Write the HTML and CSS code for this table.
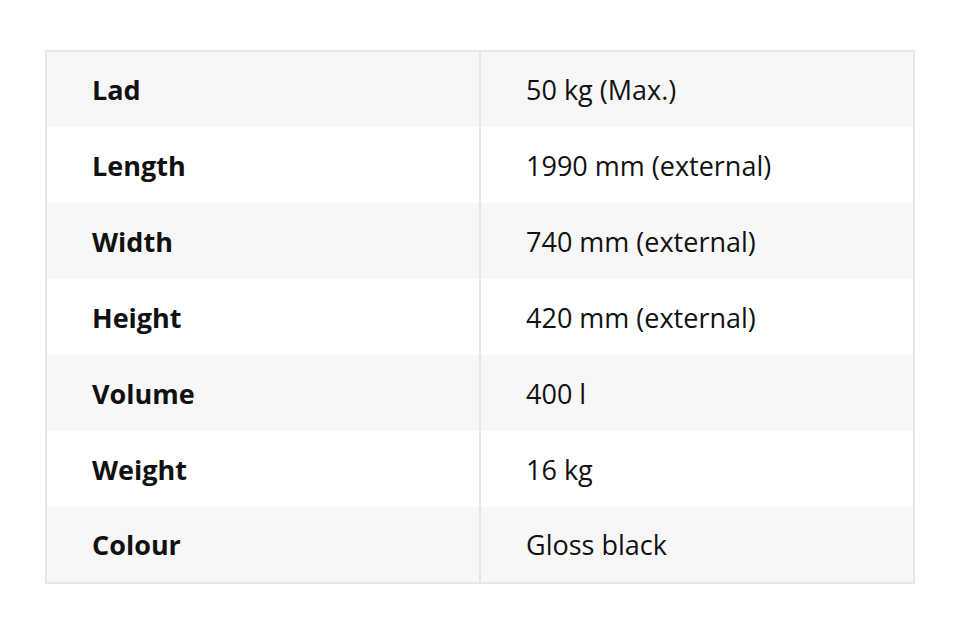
FILE: index.html
```html
<!DOCTYPE html>
<html lang="en">
<head>
<meta charset="utf-8">
<title>Specifications</title>
<link rel="stylesheet" href="styles.css">
</head>
<body>
<div class="page">
  <table class="specs">
    <tbody>
      <tr><th>Lad</th><td>50 kg (Max.)</td></tr>
      <tr><th>Length</th><td>1990 mm (external)</td></tr>
      <tr><th>Width</th><td>740 mm (external)</td></tr>
      <tr><th>Height</th><td>420 mm (external)</td></tr>
      <tr><th>Volume</th><td>400 l</td></tr>
      <tr><th>Weight</th><td>16 kg</td></tr>
      <tr><th>Colour</th><td>Gloss black</td></tr>
    </tbody>
  </table>
</div>
</body>
</html>
```
FILE: styles.css
```css
html, body {
  margin: 0;
  padding: 0;
  background: #ffffff;
}
.page {
  padding: 50px 45px 0 45px;
}
.specs {
  width: 870px;
  border-collapse: collapse;
  border: 2px solid #e6e6e6;
  font-family: "Open Sans", "Noto Sans", sans-serif;
  font-size: 27px;
  color: #111111;
  table-layout: fixed;
}
.specs th,
.specs td {
  height: 76px;
  padding: 0 0 0 45px;
  text-align: left;
  vertical-align: middle;
  box-sizing: border-box;
  line-height: 1;
}
.specs th {
  font-weight: 700;
  border-right: 2px solid #e6e6e6;
}
.specs td {
  font-weight: 400;
}
.specs tr:nth-child(odd) {
  background: #f7f7f7;
}
.specs tr:nth-child(even) {
  background: #ffffff;
}
```
